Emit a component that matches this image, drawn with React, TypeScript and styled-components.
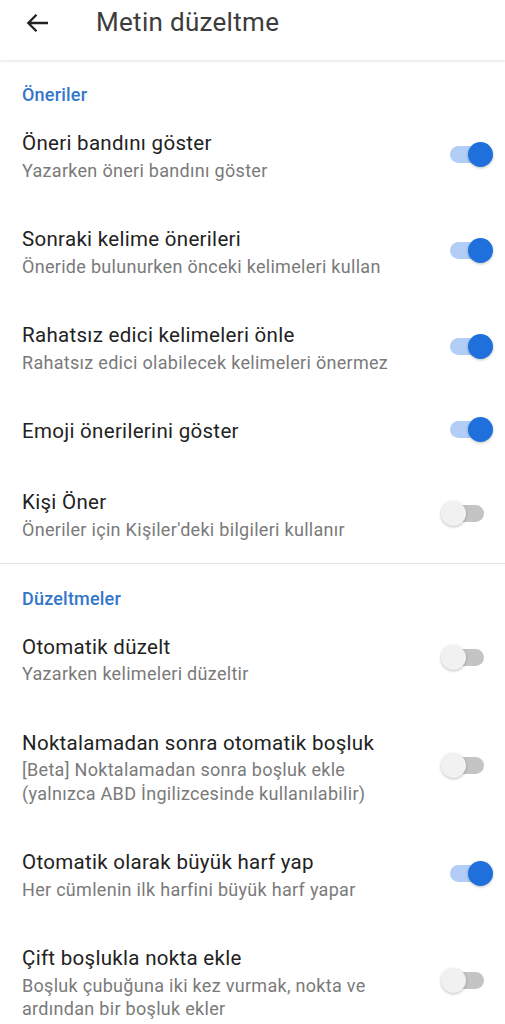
import styled, { createGlobalStyle } from "styled-components";

const Global = createGlobalStyle`
  html, body {
    margin: 0;
    padding: 0;
    background: #ffffff;
  }
  body {
    font-family: Roboto, "Noto Sans", "Liberation Sans", sans-serif;
    -webkit-font-smoothing: antialiased;
  }
`;

const Page = styled.div`
  width: 505px;
  min-height: 1024px;
  background: #fff;
  overflow: hidden;
`;

const TopBar = styled.header`
  height: 60px;
  display: flex;
  align-items: center;
  box-shadow: 0 1px 3px rgba(0, 0, 0, 0.12);
  position: relative;
  z-index: 1;
`;

const BackButton = styled.div`
  width: 96px;
  height: 44px;
  display: flex;
  align-items: center;
  padding-left: 26px;
  box-sizing: border-box;
  margin-top: -15px;
  color: #202124;
`;

const Title = styled.h1`
  margin: -16px 0 0;
  font-size: 26px;
  font-weight: 400;
  color: #3c3c3c;
  letter-spacing: 0.3px;
`;

const SectionHeader = styled.div`
  padding: 24px 22px 1.5px;
  height: 22px;
  line-height: 22px;
  font-size: 18px;
  font-weight: 500;
  letter-spacing: 0.2px;
  color: #3276cc;
`;

const Divider = styled.div`
  height: 1px;
  background: #e3e3e3;
`;

const Row = styled.div`
  display: flex;
  align-items: center;
  padding: 21.5px 12.5px 21.5px 22px;
`;

const Texts = styled.div`
  flex: 1;
  min-width: 0;
`;

const ItemTitle = styled.div`
  font-size: 20.5px;
  line-height: 28px;
  letter-spacing: 0.3px;
  color: #222;
`;

const ItemSub = styled.div`
  margin-top: 1.5px;
  font-size: 18px;
  line-height: 23.5px;
  letter-spacing: 0.3px;
  color: #7a7a7a;
  white-space: nowrap;
`;

const SwitchBox = styled.div`
  position: relative;
  width: 52px;
  height: 26px;
  flex-shrink: 0;
  margin-top: -3px;
`;

const Track = styled.div<{ $on: boolean }>`
  position: absolute;
  left: 9px;
  right: 9px;
  top: 4.5px;
  height: 17px;
  border-radius: 9px;
  background: ${(p) => (p.$on ? "#b2cdf6" : "#c4c4c4")};
`;

const Knob = styled.div<{ $on: boolean }>`
  position: absolute;
  top: 0.5px;
  left: ${(p) => (p.$on ? "27px" : "0px")};
  width: 25px;
  height: 25px;
  border-radius: 50%;
  background: ${(p) => (p.$on ? "#1f6fdd" : "#f1f1f1")};
  box-shadow: 0 1px 3px rgba(0, 0, 0, 0.25);
`;

const Switch = ({ on }: { on: boolean }) => (
  <SwitchBox>
    <Track $on={on} />
    <Knob $on={on} />
  </SwitchBox>
);

type Item = { title: string; sub?: string[]; on: boolean };

const suggestions: Item[] = [
  { title: "Öneri bandını göster", sub: ["Yazarken öneri bandını göster"], on: true },
  { title: "Sonraki kelime önerileri", sub: ["Öneride bulunurken önceki kelimeleri kullan"], on: true },
  { title: "Rahatsız edici kelimeleri önle", sub: ["Rahatsız edici olabilecek kelimeleri önermez"], on: true },
  { title: "Emoji önerilerini göster", on: true },
  { title: "Kişi Öner", sub: ["Öneriler için Kişiler'deki bilgileri kullanır"], on: false },
];

const corrections: Item[] = [
  { title: "Otomatik düzelt", sub: ["Yazarken kelimeleri düzeltir"], on: false },
  {
    title: "Noktalamadan sonra otomatik boşluk",
    sub: ["[Beta] Noktalamadan sonra boşluk ekle", "(yalnızca ABD İngilizcesinde kullanılabilir)"],
    on: false,
  },
  { title: "Otomatik olarak büyük harf yap", sub: ["Her cümlenin ilk harfini büyük harf yapar"], on: true },
  {
    title: "Çift boşlukla nokta ekle",
    sub: ["Boşluk çubuğuna iki kez vurmak, nokta ve", "ardından bir boşluk ekler"],
    on: false,
  },
];

const SettingRow = ({ item }: { item: Item }) => (
  <Row>
    <Texts>
      <ItemTitle>{item.title}</ItemTitle>
      {item.sub && (
        <ItemSub>
          {item.sub.map((l) => (
            <div key={l}>{l}</div>
          ))}
        </ItemSub>
      )}
    </Texts>
    <Switch on={item.on} />
  </Row>
);

export default function App() {
  return (
    <Page>
      <Global />
      <TopBar>
        <BackButton>
          <svg width="23" height="20" viewBox="0 0 23 20" fill="none">
            <path
              d="M22 10H2.5M10.5 1.8L2.3 10l8.2 8.2"
              stroke="currentColor"
              strokeWidth="2.3"
            />
          </svg>
        </BackButton>
        <Title>Metin düzeltme</Title>
      </TopBar>
      <SectionHeader>Öneriler</SectionHeader>
      {suggestions.map((it) => (
        <SettingRow key={it.title} item={it} />
      ))}
      <Divider />
      <SectionHeader>Düzeltmeler</SectionHeader>
      {corrections.map((it) => (
        <SettingRow key={it.title} item={it} />
      ))}
    </Page>
  );
}
